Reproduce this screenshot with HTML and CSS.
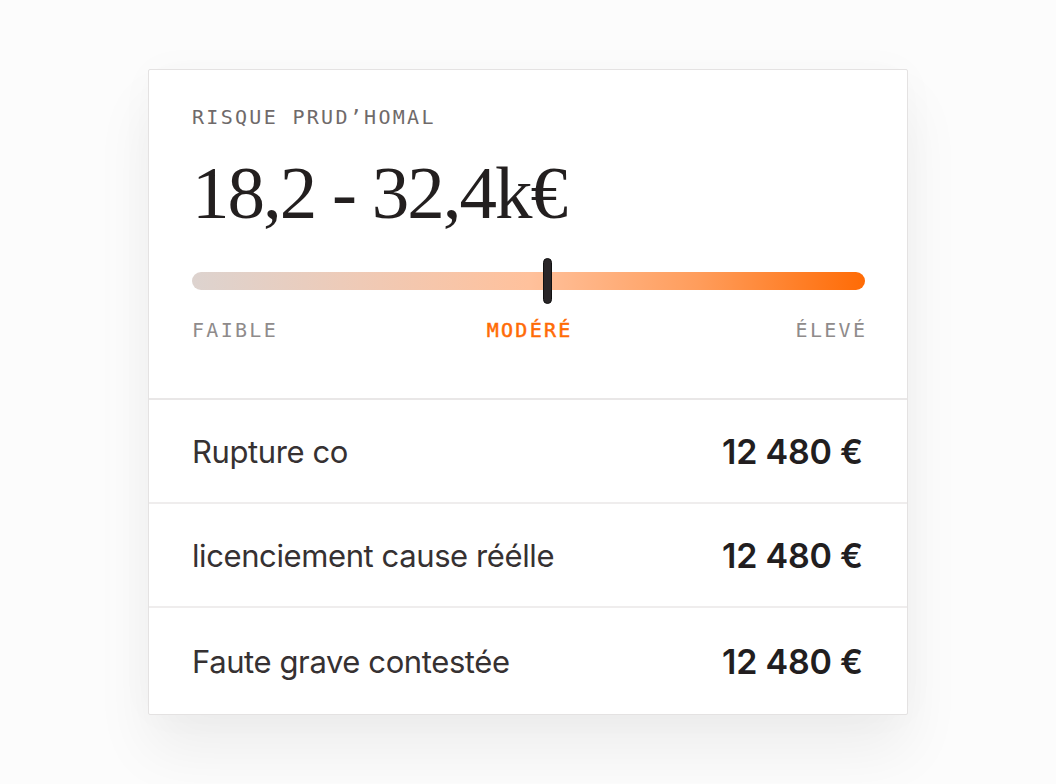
FILE: index.html
```html
<!DOCTYPE html>
<html lang="fr">
<head>
<meta charset="utf-8">
<link rel="stylesheet" href="styles.css">
</head>
<body>
<div class="card">
  <div class="head">
    <div class="label">RISQUE PRUD’HOMAL</div>
    <div class="amount">18,2 - 32,4k€</div>
    <div class="gauge">
      <div class="track"></div>
      <div class="marker"></div>
    </div>
    <div class="levels">
      <span class="low">FAIBLE</span>
      <span class="active">MODÉRÉ</span>
      <span class="high">ÉLEVÉ</span>
    </div>
  </div>
  <div class="row"><span class="name">Rupture co</span><span class="value">12 480 €</span></div>
  <div class="row"><span class="name">licenciement cause réélle</span><span class="value">12 480 €</span></div>
  <div class="row"><span class="name">Faute grave contestée</span><span class="value">12 480 €</span></div>
</div>
</body>
</html>
```
FILE: styles.css
```css
html, body { margin: 0; padding: 0; }
body {
  background: #fcfcfc;
  font-family: Inter, "Liberation Sans", sans-serif;
  color: #2a2626;
  padding-top: 69px;
  min-height: 784px;
  box-sizing: border-box;
}
.card {
  width: 760px;
  box-sizing: border-box;
  margin: 0 auto;
  background: #ffffff;
  border: 1px solid #e4e2e2;
  border-radius: 2px;
  box-shadow: 0 36px 60px rgba(0,0,0,0.06), 0 0 40px rgba(0,0,0,0.025);
}
.head {
  padding: 35px 42px 56px 43px;
  border-bottom: 2px solid #e9e7e7;
}
.label {
  font-family: "DejaVu Sans Mono", monospace;
  font-size: 20px;
  line-height: 24px;
  letter-spacing: 2.3px;
  color: #6f6a6a;
}
.amount {
  font-family: "Liberation Serif", serif;
  font-size: 75px;
  line-height: 80px;
  letter-spacing: -2px;
  color: #231f1f;
  margin-top: 24px;
}
.gauge {
  position: relative;
  margin-top: 25px;
  height: 46px;
  display: flex;
  align-items: center;
}
.track {
  flex: 1;
  height: 18px;
  border-radius: 9px;
  background: linear-gradient(90deg, #ddd3cf 0%, #efcab6 25%, #ffc19c 50%, #ff9d5c 75%, #ff6b05 100%);
}
.marker {
  position: absolute;
  left: 351px;
  top: 0;
  width: 9px;
  height: 46px;
  box-sizing: border-box;
  border-radius: 5px;
  background: #2a2628;
  border: 1.5px solid #111;
}
.levels {
  display: grid;
  grid-template-columns: 1fr auto 1fr;
  margin-top: 14px;
  margin-right: -2.3px;
  font-family: "DejaVu Sans Mono", monospace;
  font-size: 20px;
  line-height: 24px;
  letter-spacing: 2.3px;
  color: #8f8b8b;
}
.levels .high { text-align: right; }
.levels .active {
  color: #ff6b05;
  -webkit-text-stroke: 0.5px #ff6b05;
}
.row {
  display: flex;
  justify-content: space-between;
  align-items: center;
  height: 102px;
  padding: 0 44px 0 43px;
  border-bottom: 2px solid #efeded;
}
.row:last-child { border-bottom: none; height: 106px; }
.name {
  font-size: 31px;
  letter-spacing: -0.4px;
  color: #363132;
}
.value {
  font-size: 34px;
  font-weight: 600;
  letter-spacing: -0.2px;
  color: #221e1f;
}
```
